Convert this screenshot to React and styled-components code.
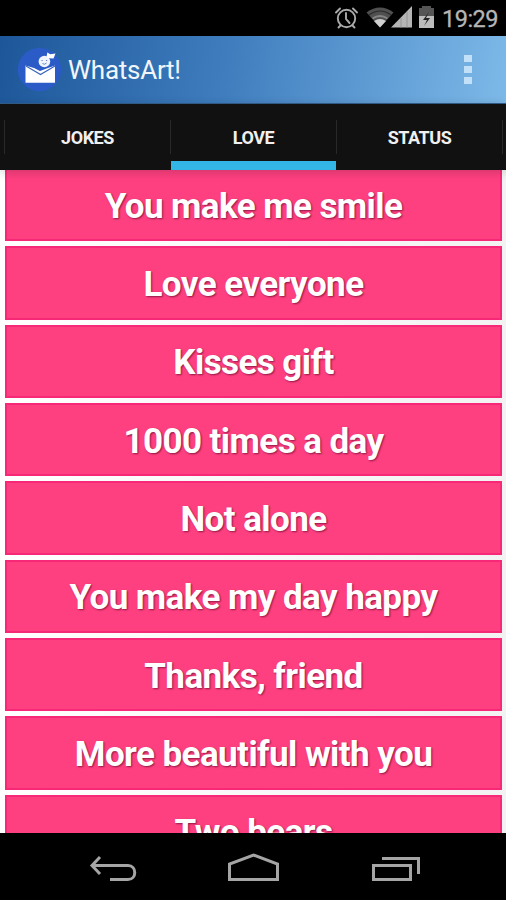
import React from "react";
import styled, { createGlobalStyle } from "styled-components";

const GlobalStyle = createGlobalStyle`
  * { box-sizing: border-box; }
  body { margin: 0; background: #000; font-family: Roboto, "Noto Sans", sans-serif; }
`;

const Screen = styled.div`
  width: 506px;
  height: 900px;
  display: flex;
  flex-direction: column;
  overflow: hidden;
  background: #000;
`;

const StatusBar = styled.header`
  flex: none;
  height: 36px;
  display: flex;
  justify-content: flex-end;
  padding-right: 7px;
  color: #b5b5b5;
`;

const StatusIcons = styled.svg`
  flex: none;
  width: 108px;
  height: 36px;
`;

const Clock = styled.time`
  width: 57px;
  font-size: 23.5px;
  line-height: 38px;
  letter-spacing: -0.5px;
  white-space: nowrap;
  -webkit-text-stroke: 0.3px #b5b5b5;
`;

const ActionBar = styled.div`
  flex: none;
  height: 68px;
  display: flex;
  align-items: center;
  padding: 0 34px 0 18px;
  background: linear-gradient(100deg, #1d5799 0%, #3f7dbe 45%, #7db9e8 100%);
  border-bottom: 1px solid #345f8c;
`;

const Logo = styled.svg`
  width: 44px;
  height: 46px;
  flex: none;
`;

const AppTitle = styled.h1`
  flex: 1;
  margin: 0 0 0 6px;
  padding-top: 1px;
  color: #f1f6fb;
  font-size: 26px;
  font-weight: 400;
  line-height: 36px;
  letter-spacing: -0.25px;
`;

const Overflow = styled.button`
  display: grid;
  gap: 3.5px;
  padding: 0;
  border: 0;
  background: none;
`;

const Dot = styled.span`
  width: 8px;
  height: 7.3px;
  background: #c2e1f9;
`;

const Tabs = styled.nav`
  position: relative;
  z-index: 1;
  flex: none;
  height: 66px;
  display: grid;
  grid-template-columns: 166px 166px 166px;
  padding-left: 5px;
  background: linear-gradient(#292929, #292929) 4px 16px / 1px 34px no-repeat, #111;
  box-shadow: 0 2px 10px rgba(0, 0, 0, 0.2);
`;

const Tab = styled.div`
  height: 66px;
  display: grid;
  grid-template-rows: 57px 9px;
  background: linear-gradient(#292929, #292929) 100% 16px / 1px 34px no-repeat;
`;

const TabLabel = styled.span`
  padding-top: 10px;
  padding-right: 1px;
  color: #f0f0f0;
  font-size: 18px;
  font-weight: 700;
  line-height: 48px;
  letter-spacing: -0.45px;
  text-align: center;
`;

const TabIndicator = styled.span`
  margin-right: 1px;
  background: ${({ $active }) => ($active ? "#33b5e5" : "transparent")};
`;

const List = styled.main`
  flex: none;
  height: 663px;
  overflow: hidden;
  padding: 0 4px 0 5px;
  background: linear-gradient(90deg, #fff, #f2f2f2);
`;

const MessageList = styled.div`
  display: grid;
  grid-auto-rows: 73.35px;
  row-gap: 5px;
  margin-top: -2px;
`;

const Message = styled.div`
  display: flex;
  align-items: center;
  justify-content: center;
  padding-top: 4px;
  border: 2px solid #f72877;
  background: #ff4080;
  color: #fff;
  font-size: 35px;
  font-weight: 700;
  line-height: 42px;
  letter-spacing: -0.57px;
  white-space: nowrap;
  text-shadow: 1px 1px 2px rgba(80, 0, 35, 0.65);
`;

const NavBar = styled.footer`
  flex: 1;
  display: flex;
  background: #000;
`;

const NavIcons = styled.svg`
  width: 506px;
  height: 67px;
`;

const tabs = ["JOKES", "LOVE", "STATUS"];
const messages = [
  "You make me smile",
  "Love everyone",
  "Kisses gift",
  "1000 times a day",
  "Not alone",
  "You make my day happy",
  "Thanks, friend",
  "More beautiful with you",
  "Two bears",
];

function DeviceStatus() {
  return (
    <StatusIcons viewBox="334 0 108 36" aria-label="Alarm, Wi-Fi, signal and battery">
      <g fill="none" stroke="#aaa" strokeWidth="1.9" strokeLinecap="round">
        <circle cx="346.5" cy="18.5" r="8.7" />
        <path d="M346 13v6l3.5 4M336 12.5l4-4M357 12.5l-4-4M340.5 25.5l-2 2M352.5 25.5l2 2" />
      </g>
      <path d="M380 27.5 366.5 12.5Q380 2.5 393.5 12.5Z" fill="#505050" />
      <path d="M369 15q11-8 22 0" fill="none" stroke="#292929" strokeWidth="1.2" />
      <path d="M372.5 18.5q7.5-5 15 0" fill="none" stroke="#858585" strokeWidth="2" />
      <path d="m380 27.5-6-6.5q6-4 12 0Z" fill="#d0d0d0" />
      <path d="M391 27.5 412 6v21.5Z" fill="#b5b5b5" />
      <path d="M401 18v9.5M407 12v15.5" stroke="#949494" />
      <path d="M419 8h3V6h9v2h3v8h-15Z" fill="#555" />
      <path d="M419 16h15v12h-15Z" fill="#bdbdbd" />
      <path d="m429 12-6 8h4l-3 6 6-8h-4Z" fill="#222" />
    </StatusIcons>
  );
}

function WhatsArtLogo() {
  return (
    <Logo viewBox="18 47 44 46" aria-label="WhatsArt logo">
      <circle cx="39.5" cy="69.5" r="21.7" fill="#2b5bc7" />
      <path d="M25.5 65.5 34 68l6 3 8-3 7-2.5v17.3H25.5Z" fill="#fff" />
      <circle cx="44.4" cy="61.5" r="5.8" fill="#eff4ff" />
      <path d="m46.5 57 .8-4.5 3 1.7 5.2-.6-2 4.8-4.5-.2Z" fill="#fff" />
      <path d="m26 66 14.5 8.5L55 66" fill="none" stroke="#3863bd" strokeWidth="1.1" />
      <path d="M41.5 60.5h1.2M46 60.5h1.2M42.5 63.5q2 1.8 4-.5" fill="none" stroke="#6184c6" />
    </Logo>
  );
}

export default function App() {
  return (
    <>
      <GlobalStyle />
      <Screen>
        <StatusBar><DeviceStatus /><Clock>19:29</Clock></StatusBar>
        <ActionBar>
          <WhatsArtLogo />
          <AppTitle>WhatsArt!</AppTitle>
          <Overflow aria-label="More options"><Dot /><Dot /><Dot /></Overflow>
        </ActionBar>
        <Tabs>
          {tabs.map((label) => (
            <Tab key={label}>
              <TabLabel>{label}</TabLabel>
              <TabIndicator $active={label === "LOVE"} />
            </Tab>
          ))}
        </Tabs>
        <List>
          <MessageList>
            {messages.map((message) => <Message key={message}>{message}</Message>)}
          </MessageList>
        </List>
        <NavBar>
          <NavIcons viewBox="0 833 506 67" aria-label="Back, home and recent apps">
            <g fill="none" stroke="#a5a5a5" strokeWidth="3">
              <path d="m100 857-8 8.5 8 8.5M92 865.5h36c9 0 9 14 0 14h-18" />
              <path d="M229.5 879.5V864l24-9 24 9v15.5Z" />
              <path d="M373.5 865.5h37v14h-37ZM382 858.5h36.5V874" />
            </g>
          </NavIcons>
        </NavBar>
      </Screen>
    </>
  );
}
